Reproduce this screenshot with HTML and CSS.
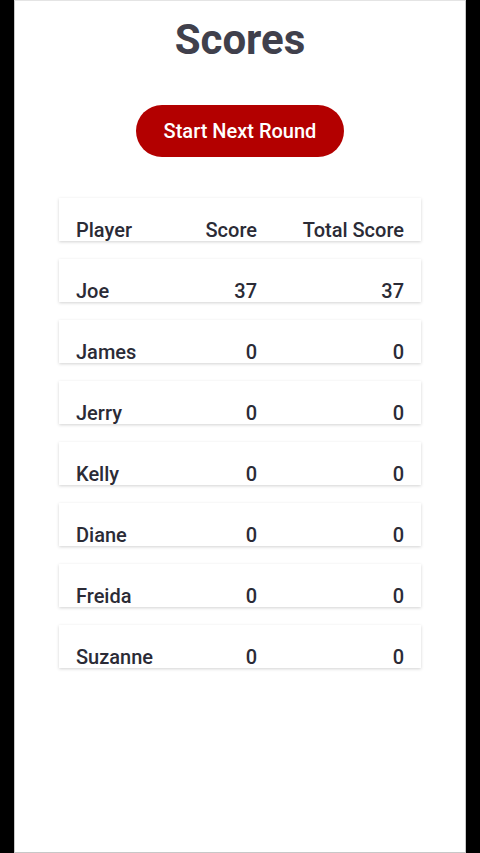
FILE: index.html
```html
<!DOCTYPE html>
<html lang="en">
<head>
  <meta charset="UTF-8">
  <title>Scores</title>
  <link rel="stylesheet" href="styles.css">
</head>
<body>
  <div class="screen">
    <h1>Scores</h1>
    <div class="actions">
      <button class="next-btn">Start Next Round</button>
    </div>

    <div class="scores">
      <div class="row head">
        <span>Player</span>
        <span class="num">Score</span>
        <span class="num">Total Score</span>
      </div>
      <div class="row"><span>Joe</span><span class="num">37</span><span class="num">37</span></div>
      <div class="row"><span>James</span><span class="num">0</span><span class="num">0</span></div>
      <div class="row"><span>Jerry</span><span class="num">0</span><span class="num">0</span></div>
      <div class="row"><span>Kelly</span><span class="num">0</span><span class="num">0</span></div>
      <div class="row"><span>Diane</span><span class="num">0</span><span class="num">0</span></div>
      <div class="row"><span>Freida</span><span class="num">0</span><span class="num">0</span></div>
      <div class="row"><span>Suzanne</span><span class="num">0</span><span class="num">0</span></div>
    </div>
  </div>
</body>
</html>
```

FILE: styles.css
```css
html, body {
  margin: 0;
  height: 100%;
  background-color: #000;
}

body {
  font-family: Roboto, "Noto Sans", sans-serif;
}

.screen {
  box-sizing: border-box;
  margin: 0 14px;
  height: 853px;
  background-color: #fff;
  border: 1px solid #c8c8c8;
  border-top-color: #e4e4e4;
  padding-top: 13px;
}

h1 {
  margin: 0;
  font-size: 42px;
  line-height: 52px;
  font-weight: 700;
  color: #40404c;
  text-align: center;
}

.actions {
  display: flex;
  justify-content: center;
  margin-top: 39px;
}

.next-btn {
  width: 208px;
  height: 52px;
  border: none;
  border-radius: 26px;
  background-color: #b30000;
  color: #fff;
  font-family: Roboto, sans-serif;
  font-size: 20px;
  font-weight: 500;
}

.scores {
  display: flex;
  flex-direction: column;
  gap: 18px;
  margin: 41px 44px 0 44px;
}

.row {
  display: grid;
  grid-template-columns: 110px 71px 1fr;
  align-items: end;
  box-sizing: border-box;
  height: 43px;
  padding: 0 17px 0 17px;
  background-color: #fff;
  box-shadow: 0 1px 3px rgba(0, 0, 0, 0.18);
  font-size: 20px;
  font-weight: 500;
  line-height: 22px;
  color: #2b2b36;
}

.num {
  text-align: right;
}
```
